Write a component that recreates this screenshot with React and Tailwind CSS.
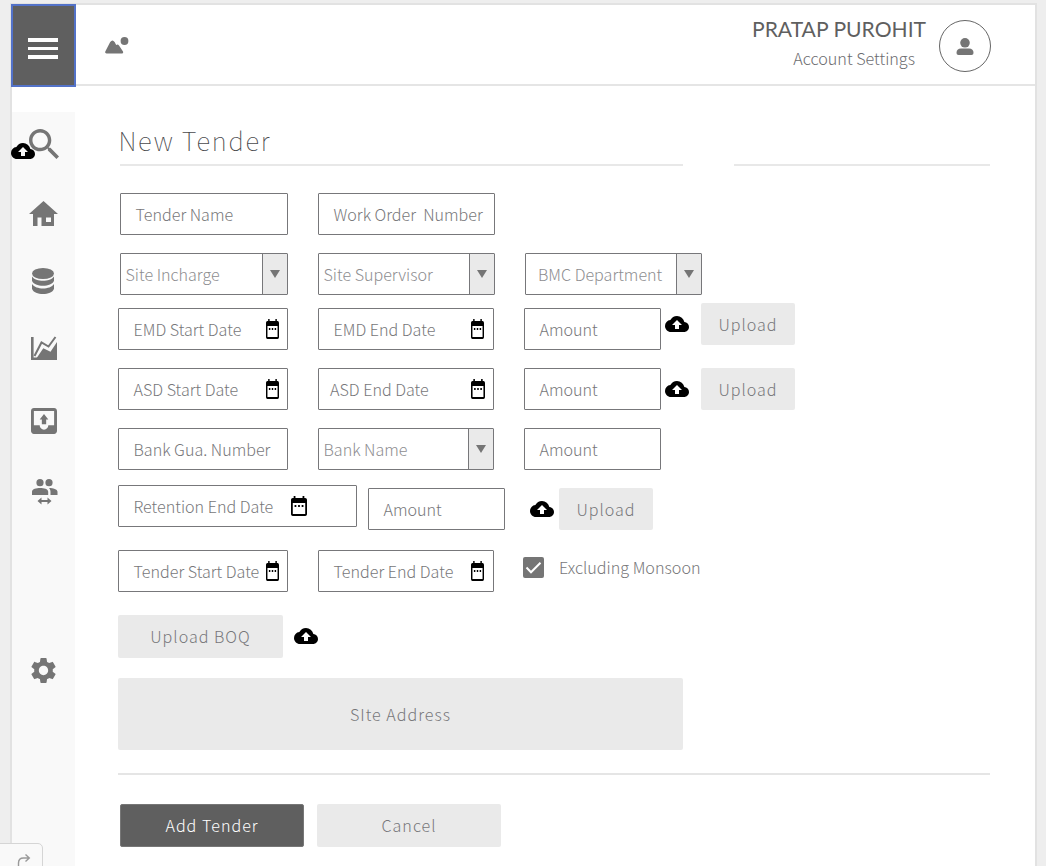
import React from "react";
import { MdCloudUpload, MdSettings } from "react-icons/md";

const base = "font-['Noto_Sans_CJK_SC','Source_Sans_Pro',sans-serif] font-light";

function Cloud({ className = "" }) {
  return <MdCloudUpload className={"size-6 shrink-0 text-black " + className} />;
}

function Calendar({ className = "" }) {
  return (
    <svg className={"h-5 shrink-0 " + className} viewBox="3 2 18 20" preserveAspectRatio="none" fill="#000">
      <path d="M9 11H7v2h2v-2zm4 0h-2v2h2v-2zm4 0h-2v2h2v-2zm2-7h-1V2h-2v2H8V2H6v2H5c-1.11 0-2 .9-2 2v14c0 1.1.89 2 2 2h14c1.1 0 2-.9 2-2V6c0-1.1-.9-2-2-2zm0 16H5V9h14v11z" />
    </svg>
  );
}

function Field({ label, className = "", pad = "pl-[14.500px]", calendar }) {
  return (
    <div className={"flex h-[42px] shrink-0 items-center rounded-[1px] border border-[#77777a] bg-white " + className}>
      <span className={"whitespace-pre text-[16.100px] leading-[42px] text-[#77777a] " + pad}>{label}</span>
      {calendar && <Calendar className={calendar} />}
    </div>
  );
}

function Select({ label, className = "", pad = "pl-[4.500px]" }) {
  return (
    <div className={"flex h-[42px] shrink-0 items-stretch rounded-[1px] border border-[#77777a] bg-white " + className}>
      <span className={"flex-1 whitespace-nowrap text-[16.100px] leading-10 text-[#8d8d90] " + pad}>{label}</span>
      <span className="flex w-[25px] justify-center border-l border-[#77777a] bg-[#eaeaea] pt-4">
        <svg className="h-2 w-[10px]" viewBox="0 0 10 8" fill="#757575">
          <path d="M0 0h10L5 8z" />
        </svg>
      </span>
    </div>
  );
}

function Button({ children, className = "" }) {
  return (
    <button className={"flex shrink-0 items-center justify-center rounded-[2px] bg-[#eaeaea] text-[16.100px] font-light leading-none tracking-[1px] text-[#77777a] " + className}>
      {children}
    </button>
  );
}

function Sidebar() {
  return (
    <nav className="mt-[26px] flex w-[63px] shrink-0 flex-col bg-[#f9f9f9] pl-4 text-[#757575]">
      <svg className="ml-[0.500px] mt-[17px] size-[30px] shrink-0" viewBox="3 3 17.49 17.49" fill="currentColor">
        <path d="M15.5 14h-.79l-.28-.27C15.41 12.59 16 11.11 16 9.5 16 5.91 13.09 3 9.5 3S3 5.91 3 9.5 5.91 16 9.5 16c1.61 0 3.09-.59 4.23-1.57l.27.28v.79l5 4.99L20.49 19l-4.99-5zm-6 0C7.01 14 5 11.99 5 9.5S7.01 5 9.5 5 14 7.01 14 9.5 11.99 14 9.5 14z" />
      </svg>
      <svg className="ml-px mt-[42px] h-[25px] w-[29px] shrink-0" viewBox="0 0 29 25" fill="currentColor">
        <path fillRule="evenodd" d="M14.5 0 29 13h-4v12H12.5v-8.500H8.500V25H4V13H0zM17 16.500v4.500h5v-4.500z" />
      </svg>
      <svg className="ml-1 mt-[42px] h-[26px] w-[22px] shrink-0" viewBox="0 0 22 26" fill="currentColor">
        <ellipse cx="11" cy="5.500" rx="11" ry="5.500" />
        <path d="M0 8.500c2 3 6.500 4.300 11 4.300S20 11.500 22 8.500v4.200c-1.200 3.400-6 5-11 5s-9.800-1.600-11-5z" />
        <path d="M0 16c2 3 6.500 4.500 11 4.500S20 19 22 16v4.700c-1.200 3.700-6 5.300-11 5.300S1.200 24.400 0 20.700z" />
      </svg>
      <svg className="ml-[3px] mt-[42px] h-6 w-[26px] shrink-0" viewBox="0 0 26 24" fill="none">
        <path d="M1.300 1v21.700H26" stroke="currentColor" strokeWidth="2.600" />
        <path d="m3.500 20 7-13.500 7 4L24.500 1" stroke="currentColor" strokeWidth="2" />
        <path d="m5 23 7.300-10.800 7.200 3.500L26 6v18H5z" fill="currentColor" />
      </svg>
      <svg className="ml-[3px] mt-[48px] size-[26px] shrink-0" viewBox="3 3 18 18" fill="currentColor">
        <path d="M19 3H5c-1.100 0-2 .9-2 2v14c0 1.100.9 2 2 2h14c1.100 0 2-.9 2-2V5c0-1.100-.9-2-2-2zm0 12h-4c0 1.660-1.350 3-3 3s-3-1.340-3-3H5V5h14v10z" />
        <path d="M9 11h1.500v3.200h3V11H15l-3-3.800z" />
      </svg>
      <svg className="ml-[3.500px] mt-[45px] h-[26px] w-[26px] shrink-0" viewBox="0 0 26 26" fill="currentColor">
        <circle cx="8" cy="3.700" r="3.600" />
        <circle cx="17" cy="3.700" r="3.600" />
        <path d="M0 16v-3.200C0 10 4.500 9 8.200 9s8 1 8 3.800V16zM17 9c4 .1 8.500 1.200 8.500 3.800V16h-7v-3c0-1.700-.6-3-1.500-4z" />
        <path d="m5.500 22 4-3.500V21h6v-2.500l4 3.500-4 3.500V23h-6v2.500z" />
      </svg>
      <MdSettings className="mt-[149.500px] size-[31px] shrink-0" />
    </nav>
  );
}

export default function App() {
  return (
    <div className={"relative h-[866px] w-[1046px] overflow-hidden bg-[#eeeeee] pl-[10px] pt-[3px] " + base}>
      <div className="flex h-[863px] w-[1027px] flex-col border-x-2 border-t-2 border-[#e2e2e2] bg-white">
        <header className="flex h-[81px] shrink-0 border-b-2 border-[#e5e5e5]">
          <button className="relative z-10 -ml-px -mt-px flex h-[83px] w-[65px] shrink-0 flex-col items-center justify-center gap-[5px] border-2 border-[#5372c8] bg-[#5f5f5f] pr-px pt-[6px]">
            <span className="h-[4px] w-[30px] bg-white" />
            <span className="h-[3px] w-[30px] bg-white" />
            <span className="h-[4px] w-[30px] bg-white" />
          </button>
          <svg className="ml-[29px] mt-[32px] h-[17px] w-[24px] shrink-0" viewBox="0 0 24 17" fill="#757575">
            <circle cx="19.500" cy="4" r="3.900" />
            <path d="M.3 14.500 5.200 5Q7.500 2 9.600 5l1.600 3Q12.800 6.800 14 8.500l4 6Q18.600 16.500 17 16.500H1.500Q-.4 16.300.3 14.500Z" />
          </svg>
          <div className="ml-auto flex flex-col items-end pt-[11px]">
            <div className="-mr-px whitespace-nowrap font-['Lato',sans-serif] text-[21.100px] font-normal leading-[26px] text-[#5f5f5f]">PRATAP PUROHIT</div>
            <div className="mr-[10px] mt-[4px] whitespace-nowrap text-[16.200px] leading-6 text-[#6c6c6f]">Account Settings</div>
          </div>
          <div className="ml-[14px] mr-[44px] mt-[15px] flex size-[52px] shrink-0 items-center justify-center rounded-full border border-[#666666]">
            <svg className="h-[17px] w-[18px]" viewBox="0 0 18 17" fill="#757575">
              <circle cx="9" cy="4.800" r="4.800" />
              <path d="M.5 15q0-4.500 4.500-4.500h8q4.500 0 4.500 4.500 0 2-2 2h-13q-2 0-2-2z" />
            </svg>
          </div>
        </header>

        <div className="flex min-h-0 flex-1">
          <Sidebar />
          <main className="flex min-w-0 flex-1 flex-col items-start pl-[43px]">
            <div className="ml-[2px] mt-[34px] flex h-[46px] gap-[51px]">
              <h1 className="w-[563px] border-b-2 border-[#e8e8e8] text-[25.700px] font-thin leading-[40px] tracking-[1.700px] text-[#4a4a4d]"><span className="-ml-[1.500px]">New Tender</span></h1>
              <div className="w-[256px] border-b-2 border-[#e8e8e8]" />
            </div>

            <div className="ml-[2px] mt-[27px] flex gap-[30px]">
              <Field label="Tender Name" className="w-[168px]" />
              <Field label="Work Order  Number" className="w-[177px]" />
            </div>
            <div className="ml-[2px] mt-[18px] flex gap-[30px]">
              <Select label="Site Incharge" className="w-[168px]" />
              <Select label="Site Supervisor" className="w-[177px]" />
              <Select label="BMC Department" className="w-[177px]" pad="pl-[12px]" />
            </div>
            <div className="mt-[8px] flex items-start">
              <Field label="EMD Start Date" className="mt-[5px] w-[170px]" calendar="ml-auto mr-[8px] w-[13px]" />
              <Field label="EMD End Date" className="ml-[30px] mt-[5px] w-[176px]" calendar="ml-auto mr-[9px] w-[13px]" />
              <Field label="Amount" className="ml-[30px] mt-[5px] w-[137px]" />
              <Cloud className="ml-[4px] mt-[9px]" />
              <Button className="ml-[12px] h-[42px] w-[94px]">Upload</Button>
            </div>
            <div className="mt-[18px] flex items-start">
              <Field label="ASD Start Date" className="w-[170px]" calendar="ml-auto mr-[8px] w-[13px]" />
              <Field label="ASD End Date" className="ml-[30px] w-[176px]" pad="pl-[11px]" calendar="ml-auto mr-[8px] w-[14px]" />
              <Field label="Amount" className="ml-[30px] w-[137px]" />
              <Cloud className="ml-[4px] mt-[9px]" />
              <Button className="ml-[12px] h-[42px] w-[94px]">Upload</Button>
            </div>
            <div className="mt-[18px] flex gap-[30px]">
              <Field label="Bank Gua. Number" className="w-[170px]" />
              <Select label="Bank Name" className="w-[176px]" />
              <Field label="Amount" className="w-[137px]" />
            </div>
            <div className="mt-[15px] flex items-start">
              <Field label="Retention End Date" className="w-[239px]" calendar="ml-auto mr-[49px] w-4" />
              <Field label="Amount" className="ml-[11px] mt-[3px] w-[137px]" />
              <Cloud className="ml-[25px] mt-3" />
              <Button className="ml-[5px] mt-[3px] h-[42px] w-[94px]">Upload</Button>
            </div>
            <div className="mt-5 flex items-start">
              <Field label="Tender Start Date" className="w-[170px]" calendar="ml-auto mr-[8px] w-[13px]" />
              <Field label="Tender End Date" className="ml-[30px] w-[176px]" calendar="ml-auto mr-[9px] w-[13px]" />
              <label className="ml-[29px] mt-[6px] flex items-center">
                <svg className="mt-px size-[21px]" viewBox="0 0 21 21" fill="none">
                  <rect width="21" height="21" rx="2" fill="#757575" />
                  <path d="m3.500 10.500 4.500 4.700 9.500-9.500" stroke="#fff" strokeWidth="2" />
                </svg>
                <span className="ml-[15px] whitespace-nowrap text-[16.150px] leading-[22px] text-[#77777a]">Excluding Monsoon</span>
              </label>
            </div>
            <div className="mt-[23px] flex items-start">
              <Button className="h-[43px] w-[165px] pb-px">Upload BOQ</Button>
              <Cloud className="ml-[11px] mt-[9px]" />
            </div>
            <Button className="mt-5 h-[72px] w-[565px]">SIte Address</Button>
            <div className="mt-[23px] h-[2px] w-[872px] shrink-0 bg-[#e5e5e5]" />
            <div className="ml-[2px] mt-[29px] flex gap-[13px]">
              <button className="flex h-[43px] w-[184px] items-center justify-center rounded-[2px] border border-[#777777] bg-[#5f5f5f] pb-px text-[16.100px] font-light leading-none tracking-[1px] text-white">Add Tender</button>
              <Button className="h-[43px] w-[184px] pb-px">Cancel</Button>
            </div>
          </main>
        </div>
      </div>
      <Cloud className="absolute left-[11px] top-[139px]" />
      <div className="absolute left-[-4px] top-[843px] h-[30px] w-[47px] rounded-tr-[5px] border border-[#d5d5d5] bg-[#f9f9f9]">
        <svg className="ml-[20px] mt-[9px] h-4 w-[14px]" viewBox="0 0 14 16" fill="none" stroke="#999999" strokeWidth="1.400">
          <path d="M1.500 16V10q0-5 5-5h5.500M8.500 1.500 12.300 5 8.500 8.500" />
        </svg>
      </div>
    </div>
  );
}
